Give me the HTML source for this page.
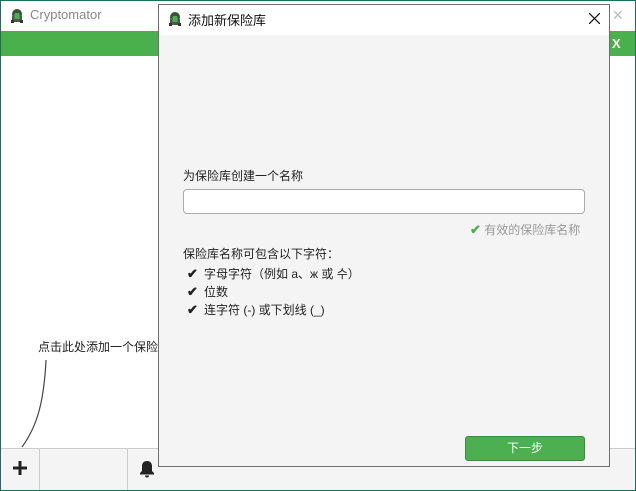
<!DOCTYPE html>
<html><head><meta charset="utf-8"><style>
*{margin:0;padding:0;box-sizing:border-box}
body{width:636px;height:491px;position:relative;overflow:hidden;background:#fff;font-family:"Liberation Sans","Noto Sans CJK SC",sans-serif;font-size:12px;color:#222}
.abs{position:absolute}
.ck{color:#222;font-size:13px;font-weight:bold;display:inline-block;width:17px}
</style></head><body>
<div class="abs" style="left:0;top:0;width:636px;height:491px;border:1px solid #1f6b5e"></div>
<div class="abs" style="left:1px;top:31px;width:634px;height:25px;background:#49b04b"></div>
<div class="abs" style="left:612px;top:36px;color:#fff;font-weight:bold;font-size:13px">X</div>
<div class="abs" style="left:612px;top:7px;color:#bbb;font-size:14px">✕</div>
<svg class="abs" style="left:9px;top:8px" width="16" height="16" viewBox="0 0 16 16"><circle cx="8" cy="6" r="5" fill="#3f4f3f"/><rect x="3" y="7" width="10" height="7" rx="2" fill="#4a5a48"/><rect x="5.5" y="5" width="5" height="6" rx="1" fill="#4caf50"/><rect x="2" y="12" width="3" height="3" fill="#333"/><rect x="11" y="12" width="3" height="3" fill="#333"/></svg>
<div class="abs" style="left:30px;top:7px;font-size:13px;color:#888">Cryptomator</div>
<div class="abs" style="left:38px;top:338px;font-size:12px;color:#222">点击此处添加一个保险库</div>
<svg class="abs" style="left:0;top:360px" width="60" height="100"><path d="M46 0 C44 40 38 65 22 87" stroke="#444" stroke-width="1.2" fill="none"/></svg>
<div class="abs" style="left:1px;top:448px;width:634px;height:42px;background:#f4f4f4;border-top:1px solid #ccc"></div>
<div class="abs" style="left:39px;top:448px;width:1px;height:42px;background:#ccc"></div>
<div class="abs" style="left:127px;top:448px;width:1px;height:42px;background:#ccc"></div>
<svg class="abs" style="left:13px;top:461px" width="14" height="14"><path d="M7 0v14M0 7h14" stroke="#222" stroke-width="3"/></svg>
<svg class="abs" style="left:139px;top:460px" width="16" height="18" viewBox="0 0 16 18"><path d="M8 1c-3 0-5 2-5 5v5l-2 2v1.5h14V13l-2-2V6c0-3-2-5-5-5zM6 15.5a2 2 0 004 0z" fill="#222"/></svg>
<div class="abs" style="left:158px;top:4px;width:452px;height:463px;border:1px solid #6e6e6e;background:#f4f4f4"></div>
<div class="abs" style="left:159px;top:5px;width:450px;height:30px;background:#fff"></div>
<svg class="abs" style="left:167px;top:11px" width="16" height="16" viewBox="0 0 16 16"><circle cx="8" cy="6" r="5" fill="#3f4f3f"/><rect x="3" y="7" width="10" height="7" rx="2" fill="#4a5a48"/><rect x="5.5" y="5" width="5" height="6" rx="1" fill="#4caf50"/><rect x="2" y="12" width="3" height="3" fill="#333"/><rect x="11" y="12" width="3" height="3" fill="#333"/></svg>
<div class="abs" style="left:188px;top:10px;font-size:13px;color:#111">添加新保险库</div>
<svg class="abs" style="left:589px;top:13px" width="11" height="11"><path d="M0 0L11 11M11 0L0 11" stroke="#111" stroke-width="1.2"/></svg>
<div class="abs" style="left:183px;top:167px">为保险库创建一个名称</div>
<div class="abs" style="left:183px;top:189px;width:402px;height:25px;background:#fff;border:1px solid #aaa;border-radius:4px"></div>
<div class="abs" style="left:470px;top:221px;color:#999"><span style="color:#4caf50;font-weight:bold;font-size:13px">✔</span> 有效的保险库名称</div>
<div class="abs" style="left:183px;top:245px">保险库名称可包含以下字符：</div>
<div class="abs" style="left:187px;top:265px;line-height:17px"><span class="ck">✔</span>字母字符（例如 a、ж 或 수）<br><span class="ck">✔</span>位数<br><span class="ck">✔</span>连字符 (-) 或下划线 (_)</div>
<div class="abs" style="left:465px;top:436px;width:120px;height:25px;background:#4caf50;border:1px solid #3d8b40;border-radius:3px;color:#fff;text-align:center;line-height:23px">下一步</div>
</body></html>
